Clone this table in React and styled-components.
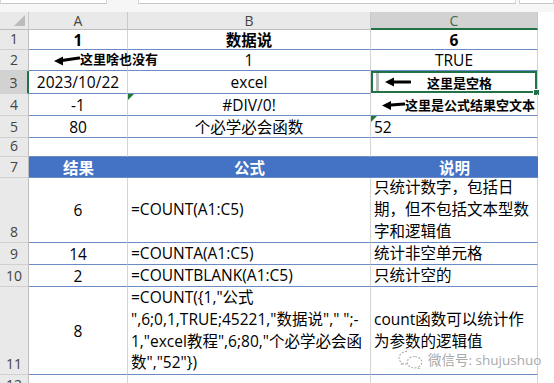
import { Fragment } from 'react';
import styled, { createGlobalStyle, css } from 'styled-components';

const GlobalStyle = createGlobalStyle`
  html, body {
    margin: 0;
    padding: 0;
    background: #fff;
  }
  body {
    font-family: "Open Sans", "Noto Sans CJK SC", sans-serif;
  }
`;

const BLUE = '#4472c4';
const LINE = '#6a8bc4';
const GRID = '#d4d4d4';
const GREEN = '#217346';

const Window = styled.div`
  position: relative;
  width: 554px;
  height: 383px;
  overflow: hidden;
  background: #fff;
`;

// bottom edge of the name box / formula bar, cut off at the top
const FormulaStrip = styled.div`
  display: flex;
  height: 12px;
  background: #f6f6f6;
`;

const StripBox = styled.div`
  width: ${(p) => p.$w}px;
  margin-left: ${(p) => p.$gap || 0}px;
  height: 3px;
  background: #fff;
  border-bottom: 1px solid #c6c6c6;
  border-left: 1px solid #d6d6d6;
  border-right: 1px solid #d6d6d6;
`;

const Sheet = styled.div`
  display: grid;
  grid-template-columns: 29px 99px 243px 167px;
  grid-template-rows: 18px 20px 21px 23px 22px 22px 19px 21px 65px 22px 22px 88px 20px;
  width: 538px;
`;

const Corner = styled.div`
  position: relative;
  background: #e9e9e9;
  border-right: 1px solid #c9c9c9;
  border-bottom: 1px solid #bdbdbd;

  &::after {
    content: '';
    position: absolute;
    right: 3px;
    bottom: 3px;
    border-left: 11px solid transparent;
    border-bottom: 11px solid #bcbcbc;
  }
`;

const ColHead = styled.div`
  display: flex;
  align-items: center;
  justify-content: center;
  box-sizing: border-box;
  background: #e9e9e9;
  border-right: 1px solid #c9c9c9;
  border-bottom: 1px solid #bdbdbd;
  font-size: 14px;
  color: #444;

  ${(p) =>
    p.$active &&
    css`
      background: #d2d2d2;
      color: #3f6b4d;
      border-bottom: 2px solid ${GREEN};
    `}
`;

const RowHead = styled.div`
  display: flex;
  align-items: flex-end;
  justify-content: center;
  box-sizing: border-box;
  padding-bottom: 1px;
  background: #e9e9e9;
  border-right: 1px solid #bdbdbd;
  border-bottom: 1px solid #d0d0d0;
  font-size: 14px;
  line-height: 18px;
  color: #444;

  ${(p) =>
    p.$active &&
    css`
      background: #d2d2d2;
      border-right: 2px solid ${GREEN};
    `}

  ${(p) =>
    p.$top &&
    css`
      align-items: flex-start;
      padding: 1px 0 0;
    `}
`;

const Cell = styled.div`
  position: relative;
  display: flex;
  align-items: center;
  justify-content: ${(p) => (p.$align === 'left' ? 'flex-start' : 'center')};
  box-sizing: border-box;
  padding: 0 3px;
  border-right: 1px solid ${GRID};
  border-bottom: 1px solid ${(p) => (p.$open ? 'transparent' : LINE)};
  font-size: 15.5px;
  font-weight: ${(p) => (p.$bold ? 700 : 400)};
  color: #000;
  white-space: nowrap;
  overflow: visible;
  z-index: ${(p) => (p.$over ? 2 : 1)};

  ${(p) =>
    p.$selected &&
    css`
      box-shadow: inset 0 0 0 2px ${GREEN};
      border-bottom-color: transparent;
    `}
`;

const HeadCell = styled.div`
  display: flex;
  align-items: center;
  justify-content: center;
  background: ${BLUE};
  border-bottom: 1px solid ${LINE};
  color: #fff;
  font-size: 15.5px;
  font-weight: 700;
`;

const Lines = styled.div`
  display: flex;
  flex-direction: column;
  line-height: 21.7px;
`;

const ErrorFlag = styled.span`
  position: absolute;
  top: 0;
  left: 0;
  border-top: 6px solid #1d7a32;
  border-right: 6px solid transparent;
`;

const FillHandle = styled.span`
  position: absolute;
  right: -3px;
  bottom: -3px;
  width: 5px;
  height: 5px;
  background: ${GREEN};
  border: 1px solid #fff;
`;

const SpaceMark = styled.span`
  align-self: stretch;
  width: 3px;
  margin: 2px 0 2px 2px;
  background: #bdbdbd;
`;

const Note = styled.div`
  display: flex;
  align-items: center;
  margin-left: ${(p) => p.$indent || 0}px;
  font-size: 13px;
  font-weight: 700;
  color: #000;
`;

const NoteText = styled.span`
  margin-left: ${(p) => p.$gap || 0}px;
  margin-top: ${(p) => p.$lift || 0}px;
`;

const Watermark = styled.div`
  position: absolute;
  left: 397px;
  top: 349px;
  display: flex;
  align-items: center;
  gap: 4px;
  font-size: 13.5px;
  color: #a9a9a9;
  text-shadow: 0 0 2px #fff, 0 0 2px #fff;
  z-index: 3;
`;

const WeChatMark = () => (
  <svg width="27" height="19" viewBox="0 0 27 19" fill="none" stroke="#b4b4b4" strokeWidth="1.2" strokeDasharray="2 1.4">
    <path d="M10 1.5c-4.4 0-8 2.8-8 6.3 0 2 1.1 3.7 2.8 4.8l-.7 2.3 2.7-1.4c1 .3 2 .5 3.2.5" />
    <path d="M17.5 6.5c-4 0-7.3 2.6-7.3 5.7s3.3 5.7 7.3 5.7c.9 0 1.8-.1 2.6-.4l2.3 1.2-.6-2c1.8-1.1 3-2.7 3-4.5 0-3.1-3.3-5.7-7.3-5.7z" />
  </svg>
);

// short black pointer used by the callouts
const Arrow = ({ w = 26, tilt = 0 }) => (
  <svg width={w} height="12" viewBox={`0 0 ${w} 12`}>
    <line x1={w - 1} y1={6 - tilt} x2="6" y2={6 + tilt / 3} stroke="#000" strokeWidth="3" strokeLinecap="round" />
    <polygon points={`0,${6 + tilt / 2} 9,${1.5 + tilt / 2} 9,${10.5 + tilt / 2}`} fill="#000" />
  </svg>
);

const results = [
  {
    n: 8,
    value: '6',
    formula: ['=COUNT(A1:C5)'],
    desc: ['只统计数字，包括日', '期，但不包括文本型数', '字和逻辑值'],
  },
  { n: 9, value: '14', formula: ['=COUNTA(A1:C5)'], desc: ['统计非空单元格'] },
  { n: 10, value: '2', formula: ['=COUNTBLANK(A1:C5)'], desc: ['只统计空的'] },
  {
    n: 11,
    value: '8',
    formula: [
      '=COUNT({1,"公式',
      '",6;0,1,TRUE;45221,"数据说"," ";-',
      '1,"excel教程",6;80,"个必学必会函',
      '数","52"})',
    ],
    desc: ['count函数可以统计作', '为参数的逻辑值'],
  },
];

const App = () => {
  return (
    <Window>
      <GlobalStyle />
      <FormulaStrip>
        <StripBox $w={106} />
        <StripBox $w={381} $gap={31} />
        <StripBox $w={33} $gap={3} />
      </FormulaStrip>

      <Sheet>
        <Corner />
        <ColHead>A</ColHead>
        <ColHead>B</ColHead>
        <ColHead $active>C</ColHead>

        <RowHead>1</RowHead>
        <Cell $bold>1</Cell>
        <Cell $bold>数据说</Cell>
        <Cell $bold>6</Cell>

        <RowHead>2</RowHead>
        <Cell $align="left" $over>
          <Note $indent={22}>
            <Arrow w={26} tilt={2} />
            <NoteText $lift={-3}>这里啥也没有</NoteText>
          </Note>
        </Cell>
        <Cell>1</Cell>
        <Cell>TRUE</Cell>

        <RowHead $active>3</RowHead>
        <Cell>2023/10/22</Cell>
        <Cell>excel</Cell>
        <Cell $align="left" $selected>
          <SpaceMark />
          <Note $indent={6}>
            <Arrow w={26} />
            <NoteText $gap={16}>这里是空格</NoteText>
          </Note>
          <FillHandle />
        </Cell>

        <RowHead>4</RowHead>
        <Cell>-1</Cell>
        <Cell>
          <ErrorFlag />
          #DIV/0!
        </Cell>
        <Cell $align="left">
          <Note $indent={8}>
            <Arrow w={23} tilt={1} />
            <NoteText>这里是公式结果空文本</NoteText>
          </Note>
        </Cell>

        <RowHead>5</RowHead>
        <Cell>80</Cell>
        <Cell>个必学必会函数</Cell>
        <Cell $align="left">
          <ErrorFlag />
          52
        </Cell>

        <RowHead>6</RowHead>
        <Cell />
        <Cell />
        <Cell />

        <RowHead>7</RowHead>
        <HeadCell>结果</HeadCell>
        <HeadCell>公式</HeadCell>
        <HeadCell>说明</HeadCell>

        {results.map((row) => (
          <Fragment key={row.n}>
            <RowHead>{row.n}</RowHead>
            <Cell>{row.value}</Cell>
            <Cell $align="left">
              <Lines>
                {row.formula.map((line) => (
                  <span key={line}>{line}</span>
                ))}
              </Lines>
            </Cell>
            <Cell $align="left">
              <Lines>
                {row.desc.map((line) => (
                  <span key={line}>{line}</span>
                ))}
              </Lines>
            </Cell>
          </Fragment>
        ))}

        <RowHead $top>12</RowHead>
        <Cell $open />
        <Cell $open />
        <Cell $open />
      </Sheet>

      <Watermark>
        <WeChatMark />
        <span>微信号: shujushuo</span>
      </Watermark>
    </Window>
  );
};

export default App;
